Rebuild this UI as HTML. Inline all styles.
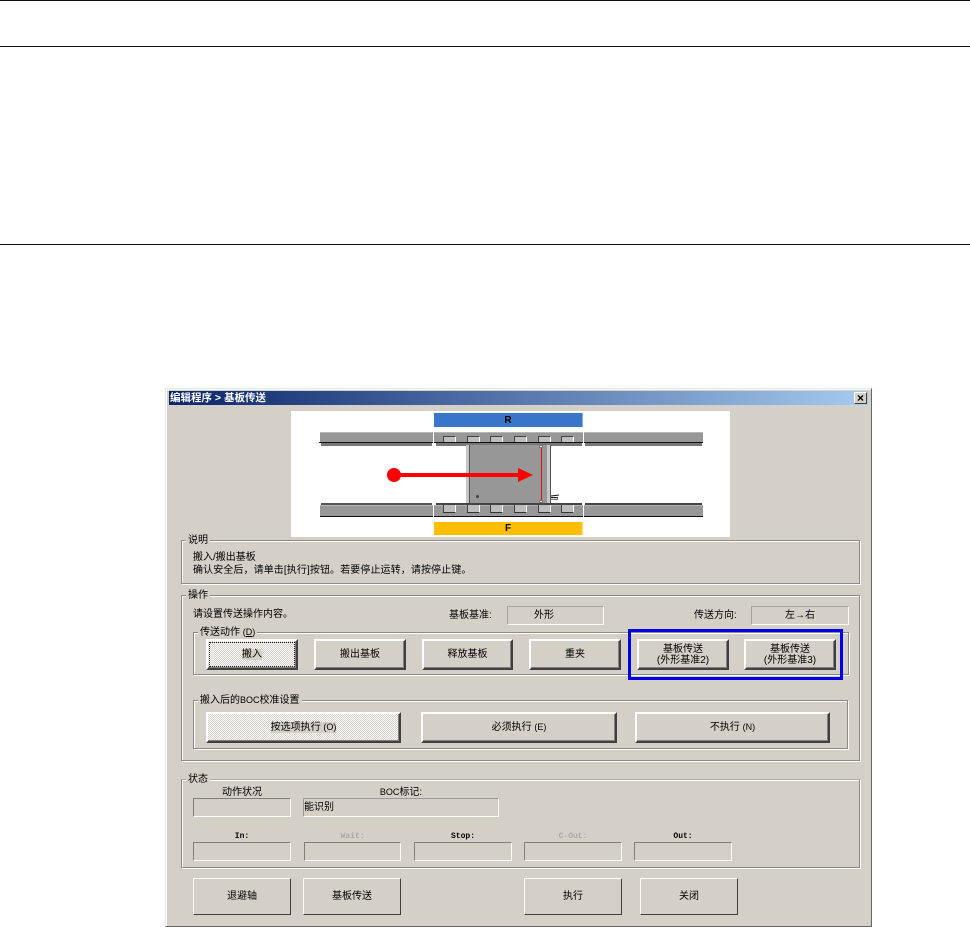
<!DOCTYPE html>
<html lang="zh"><head><meta charset="utf-8"><title>基板传送</title>
<style>
html,body{margin:0;padding:0;background:#fff}
body{position:relative;width:970px;height:927px;overflow:hidden;font-family:"Liberation Sans","WenQuanYi Zen Hei","Noto Sans CJK SC",sans-serif;font-size:10px;color:#000;line-height:13px}
div,span{position:absolute;box-sizing:border-box}
.hr{left:0;width:970px;height:1px;background:#111}
.g{border:1px solid #8c8a85;box-shadow:1px 1px 0 #fff,inset 1px 1px 0 #fff}
.l{background:#d4d0c8;white-space:nowrap;padding:0 2px;height:13px}
.t{white-space:nowrap}
.c{text-align:center}
.b{background:#d4d0c8;border-style:solid;border-width:2px;border-color:#fff #404040 #404040 #fff;box-shadow:inset -1px -1px 0 #808080;display:flex;align-items:center;justify-content:center;text-align:center;line-height:11px;font-size:10px}
.b2{background:#d4d0c8;border-style:solid;border-width:1px;border-color:#fff #404040 #404040 #fff;display:flex;align-items:center;justify-content:center;font-size:10px}
.d{background:repeating-conic-gradient(#fff 0 25%,#d4d0c8 0 50%) 0 0/2px 2px}
.f{border:1px solid;border-color:#808080 #fff #fff #808080;background:#d4d0c8;text-align:center;line-height:17px}
.s{border:1px solid;border-color:#a5a39d #fff #fff #a5a39d;background:#d4d0c8;text-align:center;line-height:17px}
.rail{background:#979797;border-top:1px solid #b5b5b5;height:11px}
.k{background:#111;height:1px}
.sh{background:#777;height:3px}
.tab{background:#bdbdbd;width:13px;height:6px;border-top:1px solid #444;border-left:1px solid #444;border-right:1px solid #fff}
.tb{background:#bdbdbd;width:13px;height:8px;border-bottom:1px solid #333;border-left:1px solid #444;border-right:1px solid #fff}
.sm{font-family:"Liberation Mono","WenQuanYi Zen Hei",monospace;font-size:8px;font-weight:bold}
.x{position:static;font-size:9px}
</style></head><body>
<div class="hr" style="top:0"></div>
<div class="hr" style="top:46px"></div>
<div class="hr" style="top:244px"></div>

<!-- dialog -->
<div style="left:165px;top:388px;width:707px;height:539px;background:#d4d0c8;border:1px solid;border-color:#e8e6e1 #666 #666 #e8e6e1;box-shadow:inset 1px 1px 0 #fff"></div>
<div style="left:169px;top:391px;width:699px;height:14px;background:linear-gradient(90deg,#0a246a,#a6caf0)"></div>
<div class="t" style="left:170px;top:391px;color:#fff;font-weight:bold;line-height:14px;font-size:10.5px">编辑程序 &gt; 基板传送</div>
<div class="b2" style="left:854px;top:392px;width:13px;height:12px;line-height:10px;font-size:12px;font-weight:bold;color:#000;border-color:#fff #404040 #404040 #fff">×</div>

<!-- picture -->
<div style="left:291px;top:411px;width:439px;height:126px;background:#fff"></div>
<div class="c" style="left:434px;top:413px;width:149px;height:14px;background:#3776c8;border-right:1px solid #8ab0e0;font-weight:bold;font-size:10px;line-height:15px;color:#000">R</div>
<div class="c" style="left:434px;top:522px;width:149px;height:13px;background:#ffbe00;border-right:1px solid #ffe080;font-weight:bold;font-size:10px;line-height:14px;color:#000">F</div>

<div class="sh" style="left:321px;top:443px;width:111px"></div>
<div class="sh" style="left:436px;top:443px;width:146px"></div>
<div class="sh" style="left:585px;top:443px;width:117px"></div>
<div class="rail" style="left:320px;top:432px;width:113px"></div>
<div class="rail" style="left:434px;top:432px;width:149px"></div>
<div class="rail" style="left:584px;top:432px;width:119px"></div>
<div class="k" style="left:319px;top:442px;width:114px"></div>
<div class="k" style="left:434px;top:442px;width:149px"></div>
<div class="k" style="left:584px;top:442px;width:119px"></div>

<div class="sh" style="left:321px;top:503px;width:111px;height:2px;background:#555"></div>
<div class="sh" style="left:436px;top:503px;width:146px;height:2px;background:#444"></div>
<div class="sh" style="left:585px;top:503px;width:117px;height:2px;background:#444"></div>
<div class="rail" style="left:320px;top:505px;width:113px"></div>
<div class="rail" style="left:434px;top:505px;width:149px"></div>
<div class="rail" style="left:584px;top:505px;width:119px"></div>
<div class="k" style="left:320px;top:516px;width:113px"></div>
<div class="k" style="left:434px;top:516px;width:149px"></div>
<div class="k" style="left:584px;top:516px;width:119px"></div>

<div class="tab" style="left:443px;top:436px"></div><div class="tab" style="left:467px;top:436px"></div><div class="tab" style="left:490px;top:436px"></div><div class="tab" style="left:514px;top:436px"></div><div class="tab" style="left:538px;top:436px"></div><div class="tab" style="left:561px;top:436px"></div>
<div class="tb" style="left:443px;top:505px"></div><div class="tb" style="left:467px;top:505px"></div><div class="tb" style="left:490px;top:505px"></div><div class="tb" style="left:514px;top:505px"></div><div class="tb" style="left:538px;top:505px"></div><div class="tb" style="left:561px;top:505px"></div>

<!-- board -->
<div style="left:466px;top:445px;width:85px;height:58px;background:#979797"></div>
<div style="left:466px;top:445px;width:3px;height:58px;background:#c4c4c4"></div>
<div style="left:469px;top:445px;width:1px;height:58px;background:#555"></div>
<div style="left:547px;top:445px;width:3px;height:58px;background:#c9c9c9"></div>
<div style="left:550px;top:445px;width:1px;height:58px;background:#555"></div>
<div style="left:541px;top:446px;width:1px;height:56px;background:#e01010"></div>
<div style="left:539px;top:445px;width:4px;height:3px;background:#fff;border:1px solid #777"></div>
<div style="left:539px;top:500px;width:4px;height:3px;background:#fff;border:1px solid #777"></div>
<div style="left:476px;top:495px;width:3px;height:3px;background:#444;border-radius:50%"></div>
<div style="left:551px;top:495px;width:8px;height:1px;background:#111;transform:rotate(-8deg)"></div>
<div style="left:551px;top:497px;width:7px;height:3px;border:1px solid #777;border-top:1px solid #111;border-left:0;background:#ddd"></div>
<svg style="position:absolute;left:380px;top:460px" width="160" height="30" viewBox="380 460 160 30"><circle cx="394" cy="475" r="7" fill="#f00"/><rect x="394" y="473" width="126" height="4" fill="#f00"/><polygon points="518,468 533,475 518,482" fill="#f00"/></svg>

<!-- 说明 -->
<div class="g" style="left:181px;top:540px;width:679px;height:44px"></div>
<div class="l" style="left:186px;top:534px">说明</div>
<div class="t" style="left:193px;top:551px">搬入/搬出基板</div>
<div class="t" style="left:193px;top:564px;letter-spacing:.1px">确认安全后，请单击[执行]按钮。若要停止运转，请按停止键。</div>

<!-- 操作 -->
<div class="g" style="left:181px;top:595px;width:679px;height:166px"></div>
<div class="l" style="left:186px;top:589px">操作</div>
<div class="t" style="left:193px;top:608px">请设置传送操作内容。</div>
<div class="t" style="left:449px;top:609px">基板基准:</div>
<div class="s" style="left:507px;top:606px;width:97px;height:19px;text-align:left;padding-left:26px">外形</div>
<div class="t" style="left:694px;top:609px">传送方向:</div>
<div class="s" style="left:751px;top:606px;width:98px;height:19px">左→右</div>

<div class="g" style="left:193px;top:632px;width:656px;height:43px"></div>
<div class="l" style="left:198px;top:626px">传送动作 <span class="x">(<u>D</u>)</span></div>
<div class="b d" style="left:206px;top:639px;width:92px;height:31px;outline:1px dotted #222;outline-offset:-4px"><span style="position:static;background:#d4d0c8">搬入</span></div>
<div class="b" style="left:314px;top:639px;width:92px;height:31px">搬出基板</div>
<div class="b" style="left:422px;top:639px;width:91px;height:31px">释放基板</div>
<div class="b" style="left:529px;top:639px;width:92px;height:31px">重夹</div>
<div class="b" style="left:637px;top:639px;width:92px;height:31px">基板传送<br>(外形基准2)</div>
<div class="b" style="left:744px;top:639px;width:92px;height:31px">基板传送<br>(外形基准3)</div>
<div style="left:628px;top:629px;width:215px;height:51px;border:3px solid #0000e6"></div>

<div class="g" style="left:193px;top:700px;width:655px;height:49px"></div>
<div class="l" style="left:198px;top:694px">搬入后的<span class="x">BOC</span>校准设置</div>
<div class="b d" style="left:206px;top:712px;width:195px;height:31px"><span style="position:static;background:#d4d0c8">按选项执行 <span class="x">(O)</span></span></div>
<div class="b" style="left:421px;top:712px;width:196px;height:31px"><span style="position:static">必须执行 <span class="x">(E)</span></span></div>
<div class="b" style="left:635px;top:712px;width:195px;height:31px"><span style="position:static">不执行 <span class="x">(N)</span></span></div>

<!-- 状态 -->
<div class="g" style="left:181px;top:779px;width:679px;height:89px;border-color:#b0aea8 #8c8a85 #8c8a85 #8c8a85"></div>
<div class="l" style="left:186px;top:773px">状态</div>
<div class="t c" style="left:193px;top:786px;width:98px">动作状况</div>
<div class="t c" style="left:303px;top:786px;width:196px"><span class="x">BOC</span>标记:</div>
<div class="f" style="left:193px;top:798px;width:98px;height:19px"></div>
<div class="f" style="left:303px;top:798px;width:196px;height:19px;text-align:left;padding-left:0;border-color:#999 #fff #fff #999">能识别</div>

<div class="t c sm" style="left:193px;top:830px;width:98px">In:</div>
<div class="t c sm" style="left:304px;top:830px;width:97px;color:#a8a8a8">Wait:</div>
<div class="t c sm" style="left:414px;top:830px;width:98px">Stop:</div>
<div class="t c sm" style="left:524px;top:830px;width:98px;color:#a8a8a8">C-Out:</div>
<div class="t c sm" style="left:634px;top:830px;width:98px">Out:</div>
<div class="f" style="left:193px;top:842px;width:98px;height:19px"></div>
<div class="f" style="left:304px;top:842px;width:97px;height:19px"></div>
<div class="f" style="left:414px;top:842px;width:98px;height:19px"></div>
<div class="f" style="left:524px;top:842px;width:98px;height:19px"></div>
<div class="f" style="left:634px;top:842px;width:98px;height:19px"></div>

<div class="b2" style="left:193px;top:878px;width:98px;height:37px">退避轴</div>
<div class="b2" style="left:303px;top:878px;width:98px;height:37px">基板传送</div>
<div class="b2" style="left:524px;top:878px;width:98px;height:37px">执行</div>
<div class="b2" style="left:640px;top:878px;width:98px;height:37px">关闭</div>
</body></html>
